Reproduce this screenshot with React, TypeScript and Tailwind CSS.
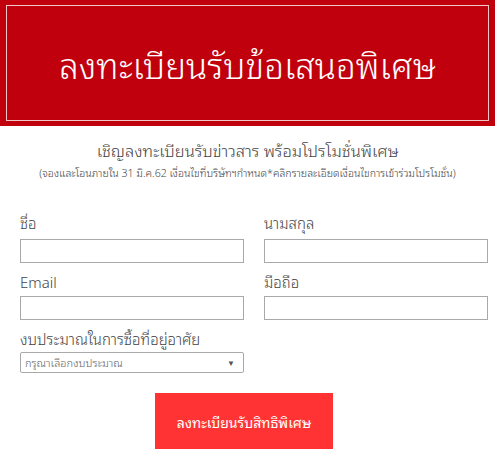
import React from "react";

export default function App() {
  const font = { fontFamily: '"Noto Sans Thai Looped", "Noto Sans Thai", "Noto Sans", sans-serif' };
  return (
    <div className="w-[495px] h-[460px] bg-white overflow-hidden" style={font}>
      <div className="h-[126px] bg-[#c1000d] pt-[5px] px-[6px]">
        <div className="h-[116px] border border-[#f0c6c6] flex items-center justify-center">
          <span className="text-white text-[35px] font-light leading-none">ลงทะเบียนรับข้อเสนอพิเศษ</span>
        </div>
      </div>
      <div className="pt-[12px] text-center text-[#444]">
        <div className="text-[16.5px] font-light leading-[24px]">เชิญลงทะเบียนรับข่าวสาร พร้อมโปรโมชั่นพิเศษ</div>
        <div className="text-[10.6px] font-light leading-[16px] mt-[3px]">(จองและโอนภายใน 31 มิ.ค.62 เงื่อนไขที่บริษัทฯกำหนด*คลิกรายละเอียดเงื่อนไขการเข้าร่วมโปรโมชั่น)</div>
      </div>
      <div className="px-[20px] pt-[31px] text-[#444]">
        <div className="grid grid-cols-[224px_224px] gap-x-[20px]">
          <div>
            <div className="text-[15px] font-light leading-[20px] h-[20px]">ชื่อ</div>
            <input className="mt-[7px] w-[224px] h-[24px] border border-[#a9a9a9] outline-none" />
          </div>
          <div>
            <div className="text-[15px] font-light leading-[20px] h-[20px]">นามสกุล</div>
            <input className="mt-[7px] w-[224px] h-[24px] border border-[#a9a9a9] outline-none" />
          </div>
          <div className="mt-[8px]">
            <div className="text-[15px] font-light leading-[20px] h-[20px]">Email</div>
            <input className="mt-[5px] w-[224px] h-[24px] border border-[#a9a9a9] outline-none" />
          </div>
          <div className="mt-[8px]">
            <div className="text-[15px] font-light leading-[20px] h-[20px]">มือถือ</div>
            <input className="mt-[5px] w-[224px] h-[24px] border border-[#a9a9a9] outline-none" />
          </div>
        </div>
        <div className="mt-[8px]">
          <div className="text-[15px] font-light leading-[20px] h-[20px]">งบประมาณในการซื้อที่อยู่อาศัย</div>
          <div className="mt-[4px] w-[224px] h-[21px] border border-[#a9a9a9] rounded-[2px] flex items-center justify-between pl-[4px] pr-[8px]">
            <span className="text-[11px] font-light text-[#666]">กรุณาเลือกงบประมาณ</span>
            <span className="text-[8px] text-[#555]">▼</span>
          </div>
        </div>
        <div className="w-[448px] flex justify-center mt-[20px]">
          <div className="w-[178px] h-[56px] bg-[#ff3333] text-white text-[14px] flex items-center justify-center">ลงทะเบียนรับสิทธิพิเศษ</div>
        </div>
      </div>
    </div>
  );
}
